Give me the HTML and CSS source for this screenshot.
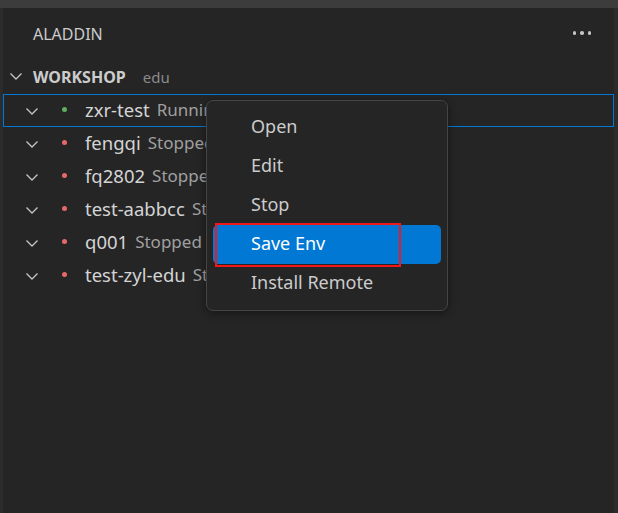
FILE: index.html
```html
<!DOCTYPE html>
<html>
<head>
<meta charset="utf-8">
<link rel="stylesheet" href="styles.css">
</head>
<body>
<div class="topbar"></div>
<div class="main">
  <div class="leftstrip"></div>
  <div class="sidebar">
    <div class="header">
      <span class="title">ALADDIN</span>
      <span class="more"><i></i><i></i><i></i></span>
    </div>
    <div class="section">
      <svg class="chev" width="16" height="16" viewBox="0 0 16 16"><path d="M2.5 5.5 L8 11 L13.5 5.5" fill="none" stroke="#c5c5c5" stroke-width="1.3"/></svg>
      <span class="sec-name">WORKSHOP</span>
      <span class="sec-desc">edu</span>
    </div>
    <div class="list">
      <div class="row selected">
        <svg class="chev" width="16" height="16" viewBox="0 0 16 16"><path d="M2.5 5.5 L8 11 L13.5 5.5" fill="none" stroke="#c5c5c5" stroke-width="1.3"/></svg>
        <span class="dot green"></span>
        <span class="name">zxr-test</span><span class="status">Running</span>
      </div>
      <div class="row">
        <svg class="chev" width="16" height="16" viewBox="0 0 16 16"><path d="M2.5 5.5 L8 11 L13.5 5.5" fill="none" stroke="#c5c5c5" stroke-width="1.3"/></svg>
        <span class="dot red"></span>
        <span class="name">fengqi</span><span class="status">Stopped</span>
      </div>
      <div class="row">
        <svg class="chev" width="16" height="16" viewBox="0 0 16 16"><path d="M2.5 5.5 L8 11 L13.5 5.5" fill="none" stroke="#c5c5c5" stroke-width="1.3"/></svg>
        <span class="dot red"></span>
        <span class="name">fq2802</span><span class="status">Stopped</span>
      </div>
      <div class="row">
        <svg class="chev" width="16" height="16" viewBox="0 0 16 16"><path d="M2.5 5.5 L8 11 L13.5 5.5" fill="none" stroke="#c5c5c5" stroke-width="1.3"/></svg>
        <span class="dot red"></span>
        <span class="name">test-aabbcc</span><span class="status">Stopped</span>
      </div>
      <div class="row">
        <svg class="chev" width="16" height="16" viewBox="0 0 16 16"><path d="M2.5 5.5 L8 11 L13.5 5.5" fill="none" stroke="#c5c5c5" stroke-width="1.3"/></svg>
        <span class="dot red"></span>
        <span class="name">q001</span><span class="status">Stopped</span>
      </div>
      <div class="row">
        <svg class="chev" width="16" height="16" viewBox="0 0 16 16"><path d="M2.5 5.5 L8 11 L13.5 5.5" fill="none" stroke="#c5c5c5" stroke-width="1.3"/></svg>
        <span class="dot red"></span>
        <span class="name">test-zyl-edu</span><span class="status">Stopped</span>
      </div>
    </div>
    <div class="menu">
      <div class="item">Open</div>
      <div class="item">Edit</div>
      <div class="item">Stop</div>
      <div class="item active">Save Env<span class="mark"></span></div>
      <div class="item">Install Remote</div>
    </div>
  </div>
  <div class="rightstrip"></div>
</div>
</body>
</html>
```
FILE: styles.css
```css
html, body {
  margin: 0;
  padding: 0;
  width: 618px;
  height: 513px;
  overflow: hidden;
  background: #252526;
  font-family: "Noto Sans", "Open Sans", sans-serif;
}
.topbar {
  height: 8px;
  background: #3c3c3c;
}
.main {
  display: flex;
  height: 505px;
}
.leftstrip {
  width: 3px;
  background: #2c2c2c;
}
.rightstrip {
  width: 4px;
  background: #2c2c2c;
}
.sidebar {
  flex: 1;
  position: relative;
  background: #252526;
}
.header {
  height: 54px;
  display: flex;
  align-items: center;
  padding: 0 23px 0 30px;
  justify-content: space-between;
}
.title {
  color: #cccccc;
  font-size: 16px;
  margin-top: -2px;
}
.more {
  display: flex;
  gap: 4px;
  margin-top: -4px;
}
.more i {
  width: 3.5px;
  height: 3.5px;
  border-radius: 50%;
  background: #c5c5c5;
}
.section {
  height: 28px;
  display: flex;
  align-items: center;
  padding-left: 5px;
}
.section .chev {
  margin-right: 9px;
}
.sec-name {
  color: #cccccc;
  font-weight: bold;
  font-size: 16px;
  margin-top: 2px;
}
.sec-desc {
  color: #8b8b8b;
  font-size: 15px;
  margin-left: 17px;
  margin-top: 2px;
}
.list {
  margin-top: 4px;
}
.row {
  height: 33px;
  display: flex;
  align-items: center;
  padding-left: 20px;
  box-sizing: border-box;
  border: 1px solid transparent;
}
.row.selected {
  border-color: #0078d4;
}
.row .chev {
  margin-right: 22px;
}
.dot {
  width: 5px;
  height: 5px;
  border-radius: 50%;
  margin-right: 18px;
  margin-top: -3px;
}
.dot.green { background: #5fae5f; }
.dot.red { background: #e46a6a; }
.name {
  color: #d4d4d4;
  font-size: 18.5px;
  margin-right: 7px;
  margin-top: -3px;
}
.status {
  color: #a0a0a0;
  font-size: 17px;
  margin-top: -2px;
}
.menu {
  position: absolute;
  left: 203px;
  top: 92px;
  width: 242px;
  box-sizing: border-box;
  padding: 7px 6px;
  background: #252526;
  border: 1px solid #454545;
  border-radius: 7px;
  box-shadow: 0 2px 8px rgba(0,0,0,0.45);
}
.item {
  position: relative;
  height: 39px;
  line-height: 37px;
  padding-left: 38px;
  color: #cccccc;
  font-size: 18px;
  border-radius: 5px;
}
.item.active {
  background: #0078d4;
  color: #ffffff;
}
.mark {
  position: absolute;
  left: 2px;
  top: -2px;
  width: 182px;
  height: 40px;
  border: 2px solid #f01818;
}
```
